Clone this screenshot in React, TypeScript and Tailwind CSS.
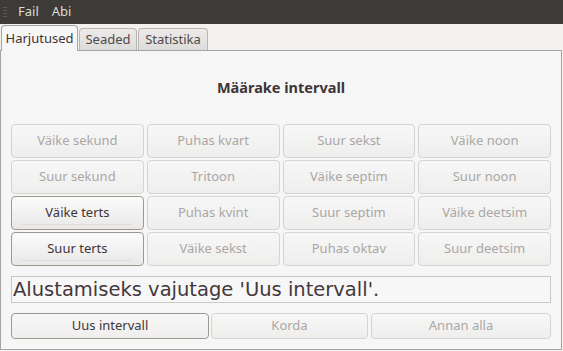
import React from 'react';

const grid: [string, boolean][] = [
  ['Väike sekund', false], ['Puhas kvart', false], ['Suur sekst', false], ['Väike noon', false],
  ['Suur sekund', false], ['Tritoon', false], ['Väike septim', false], ['Suur noon', false],
  ['Väike terts', true], ['Puhas kvint', false], ['Suur septim', false], ['Väike deetsim', false],
  ['Suur terts', true], ['Väike sekst', false], ['Puhas oktav', false], ['Suur deetsim', false],
];

function Btn({ label, on, className = '' }: { label: string; on: boolean; className?: string }) {
  return (
    <div
      className={
        'relative flex items-center justify-center rounded-[4px] border text-[13px] ' +
        (on
          ? 'border-[#9f9891] bg-gradient-to-b from-[#fbfbfb] to-[#e9e8e7] text-[#3f3538]'
          : 'border-[#d6d4d2] bg-gradient-to-b from-[#f7f7f7] to-[#efeeed] text-[#aaa7a5]') +
        ' ' + className
      }
    >
      {label}
      {on && <span className="absolute bottom-[4px] left-[10px] right-[12px] h-px bg-[#dcdcdc]" />}
    </div>
  );
}

export default function App() {
  return (
    <div className="flex h-[351px] w-[563px] flex-col bg-[#f2f1f0]" style={{ fontFamily: '"Noto Sans", "DejaVu Sans", sans-serif' }}>
      {/* menubar */}
      <div className="flex h-[24px] items-center bg-[#3c3b37] text-[13px] text-[#dfdbd2]">
        <div className="ml-[3px] flex w-[4px] flex-col gap-[2px]">
          <span className="h-px bg-[#5a5955]" />
          <span className="h-px bg-[#5a5955]" />
          <span className="h-px bg-[#5a5955]" />
          <span className="h-px bg-[#5a5955]" />
        </div>
        <span className="ml-[11px]">Fail</span>
        <span className="ml-[13px]">Abi</span>
      </div>

      {/* tabs */}
      <div className="relative z-10 flex h-[26px] items-end pl-[1px] text-[13px]">
        <div className="-mb-px flex h-[26px] w-[77px] items-center justify-center rounded-t-[4px] border border-b-0 border-[#a7a4a0] bg-[#f6f6f6] text-[#3f3538]">
          Harjutused
        </div>
        <div className="ml-[1px] flex h-[22px] w-[58px] items-center justify-center rounded-t-[4px] border border-b-0 border-[#b9b6b2] bg-gradient-to-b from-[#ecebea] to-[#dedcda] text-[#4e4a48]">
          Seaded
        </div>
        <div className="ml-[1px] flex h-[22px] w-[70px] items-center justify-center rounded-t-[4px] border border-b-0 border-[#b9b6b2] bg-gradient-to-b from-[#ecebea] to-[#dedcda] text-[#4e4a48]">
          Statistika
        </div>
      </div>

      {/* panel */}
      <div className="mr-[1px] mb-[1px] flex flex-1 flex-col border border-[#a7a4a0] bg-[#f6f6f6] px-[10px]">
        <div className="mt-[26px] text-center text-[14.5px] font-bold text-[#3f3538]">Määrake intervall</div>
        <div className="mt-[25px] grid grid-cols-4 gap-x-[3px] gap-y-[2px]">
          {grid.map(([l, on]) => (
            <Btn key={l} label={l} on={on} className="h-[34px]" />
          ))}
        </div>
        <div
          className="mt-[10px] flex h-[27px] items-center border border-[#cac7c4] bg-[#f7f7f7] px-[1px] text-[19.5px] leading-none text-[#43383b]"
          style={{ fontFamily: '"DejaVu Sans", sans-serif' }}
        >
          Alustamiseks vajutage 'Uus intervall'.
        </div>
        <div className="mt-[10px] flex gap-[2px]">
          <Btn label="Uus intervall" on={false} className="h-[26px] w-[198px] !border-[#9f9891] !text-[#3f3538]" />
          <Btn label="Korda" on={false} className="h-[26px] w-[157px]" />
          <Btn label="Annan alla" on={false} className="ml-[1px] h-[26px] flex-1" />
        </div>
      </div>
    </div>
  );
}
